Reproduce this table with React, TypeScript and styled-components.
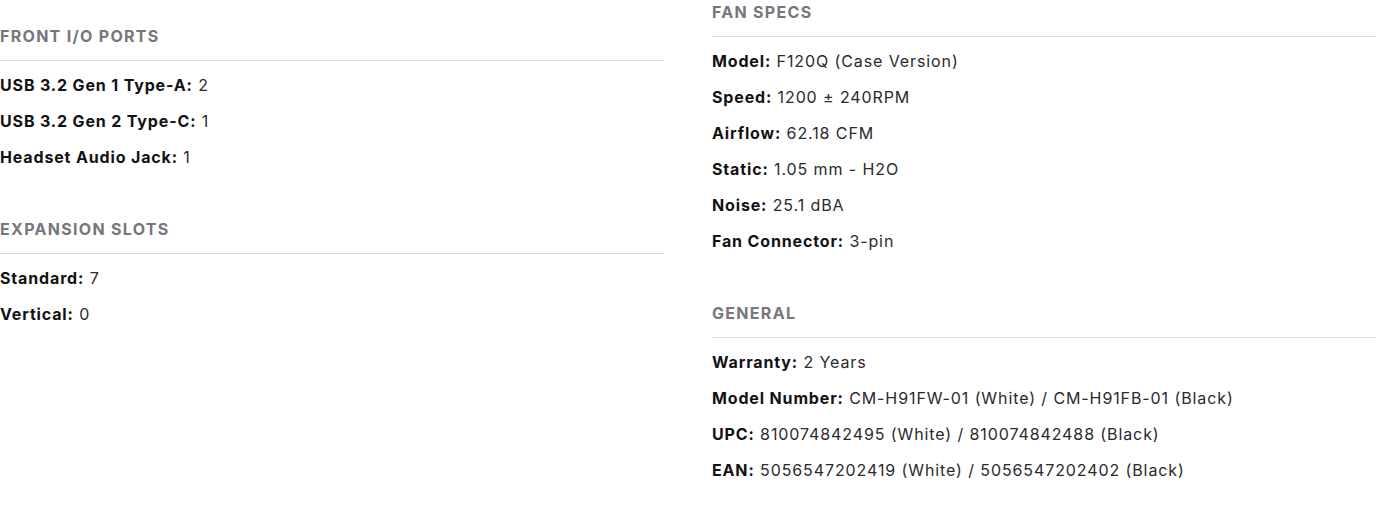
import React from "react";
import styled, { createGlobalStyle } from "styled-components";

const GlobalStyle = createGlobalStyle`
  html, body { margin: 0; padding: 0; background: #ffffff; }
  body { font-family: Inter, "Noto Sans", sans-serif; -webkit-font-smoothing: antialiased; }
`;

const Page = styled.div`
  display: grid;
  grid-template-columns: 1fr 1fr;
  column-gap: 48px;
  width: 1376px;
`;

const Column = styled.div<{ $offset?: number }>`
  display: flex;
  flex-direction: column;
  gap: 42px;
  padding-top: ${(p) => p.$offset ?? 0}px;
`;

const Section = styled.section`
  display: flex;
  flex-direction: column;
`;

const Heading = styled.h3`
  margin: 0;
  font-size: 16px;
  line-height: 24px;
  font-weight: 700;
  letter-spacing: 1.3px;
  color: #76767c;
  text-transform: uppercase;
  padding-bottom: 12px;
  border-bottom: 1px solid #dcdce3;
`;

const List = styled.ul`
  list-style: none;
  margin: 6px 0 0;
  padding: 0;
`;

const Row = styled.li`
  font-size: 16px;
  line-height: 36px;
  letter-spacing: 0.9px;
  color: #2a2a2e;
  white-space: nowrap;
`;

const Label = styled.strong`
  font-weight: 700;
  letter-spacing: 0.85px;
  color: #121214;
`;

type Spec = [string, string];
type Group = { title: string; items: Spec[] };

const left: Group[] = [
  {
    title: "Front I/O Ports",
    items: [
      ["USB 3.2 Gen 1 Type-A:", "2"],
      ["USB 3.2 Gen 2 Type-C:", "1"],
      ["Headset Audio Jack:", "1"],
    ],
  },
  {
    title: "Expansion Slots",
    items: [
      ["Standard:", "7"],
      ["Vertical:", "0"],
    ],
  },
];

const right: Group[] = [
  {
    title: "Fan Specs",
    items: [
      ["Model:", "F120Q (Case Version)"],
      ["Speed:", "1200 ± 240RPM"],
      ["Airflow:", "62.18 CFM"],
      ["Static:", "1.05 mm - H2O"],
      ["Noise:", "25.1 dBA"],
      ["Fan Connector:", "3-pin"],
    ],
  },
  {
    title: "General",
    items: [
      ["Warranty:", "2 Years"],
      ["Model Number:", "CM-H91FW-01 (White) / CM-H91FB-01 (Black)"],
      ["UPC:", "810074842495 (White) / 810074842488 (Black)"],
      ["EAN:", "5056547202419 (White) / 5056547202402 (Black)"],
    ],
  },
];

const renderGroups = (groups: Group[]) =>
  groups.map((g) => (
    <Section key={g.title}>
      <Heading>{g.title}</Heading>
      <List>
        {g.items.map(([k, v]) => (
          <Row key={k}>
            <Label>{k}</Label> {v}
          </Row>
        ))}
      </List>
    </Section>
  ));

export default function App() {
  return (
    <>
      <GlobalStyle />
      <Page>
        <Column $offset={24}>{renderGroups(left)}</Column>
        <Column>{renderGroups(right)}</Column>
      </Page>
    </>
  );
}
